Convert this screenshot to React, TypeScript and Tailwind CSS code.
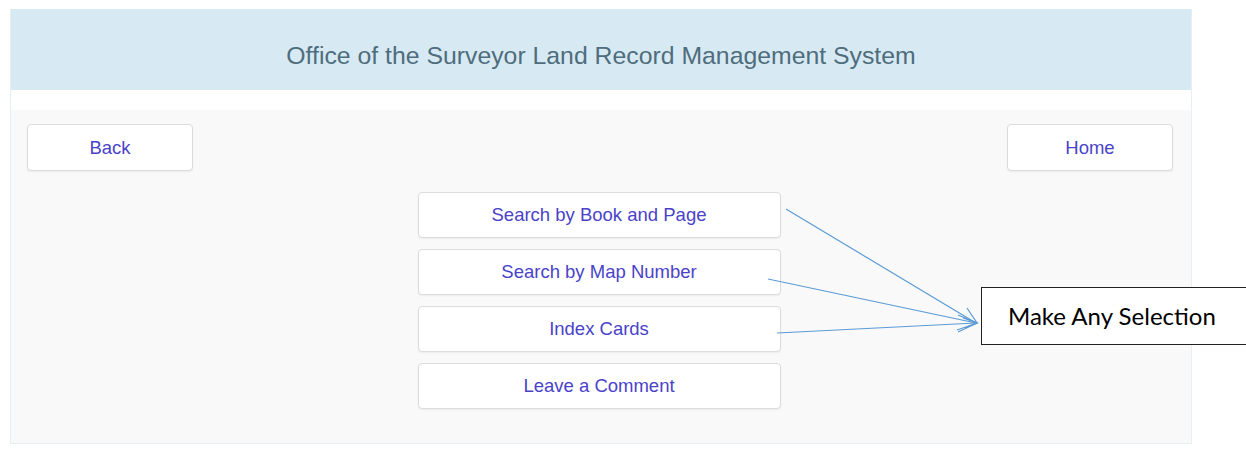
import React from "react";

const menu = ["Search by Book and Page", "Search by Map Number", "Index Cards", "Leave a Comment"];

function NavButton({ label }: { label: string }) {
  return (
    <button className="w-[166px] h-[47px] bg-white border border-[#dcdcdc] rounded-[4px] shadow-[0_1px_2px_rgba(0,0,0,0.06)] text-[18.5px] text-[#4a43c9] font-['Liberation_Sans',Arial,sans-serif]">
      {label}
    </button>
  );
}

export default function App() {
  return (
    <div className="relative w-[1246px] h-[453px] bg-white overflow-hidden font-['Liberation_Sans',Arial,sans-serif]">
      <div className="ml-[10px] mt-[9px] w-[1182px] border-x border-b border-[#e8eef1]">
        <div className="h-[81px] bg-[#d7eaf4] flex items-center justify-center pt-[12px]">
          <h1 className="text-[24.8px] text-[#4f6d7c]">Office of the Surveyor Land Record Management System</h1>
        </div>
        <div className="h-[20px] bg-white" />
        <div className="bg-[#f9f9f9] px-[16px] pt-[14px] pb-[34px]">
          <div className="flex justify-between pr-[2px]">
            <NavButton label="Back" />
            <NavButton label="Home" />
          </div>
          <div className="mt-[21px] flex flex-col items-center gap-[11px] pr-[4px]">
            {menu.map((m) => (
              <button
                key={m}
                className="w-[363px] h-[46px] bg-white border border-[#dcdcdc] rounded-[4px] shadow-[0_1px_2px_rgba(0,0,0,0.06)] text-[18.5px] text-[#4a43c9]"
              >
                {m}
              </button>
            ))}
          </div>
        </div>
      </div>

      {/* callout arrows */}
      <svg className="absolute left-0 top-0" width="1246" height="453" fill="none" stroke="#5b9bd5" strokeWidth="1.2">
        <line x1="786" y1="209" x2="976" y2="323" />
        <line x1="768" y1="279" x2="976" y2="323" />
        <line x1="777" y1="333" x2="976" y2="323" />
        <polyline points="967,308 977,323 965,328" />
        <polyline points="958,315 977,323 958,332" />
        <polyline points="963,318 977,323 957,330" />
      </svg>

      <div className="absolute left-[981px] top-[287px] w-[280px] h-[58px] bg-white border-[1.5px] border-[#222] flex items-center pl-[26px]">
        <span className="text-[24px] text-black font-['Lato','Open_Sans',sans-serif]">Make Any Selection</span>
      </div>
    </div>
  );
}
